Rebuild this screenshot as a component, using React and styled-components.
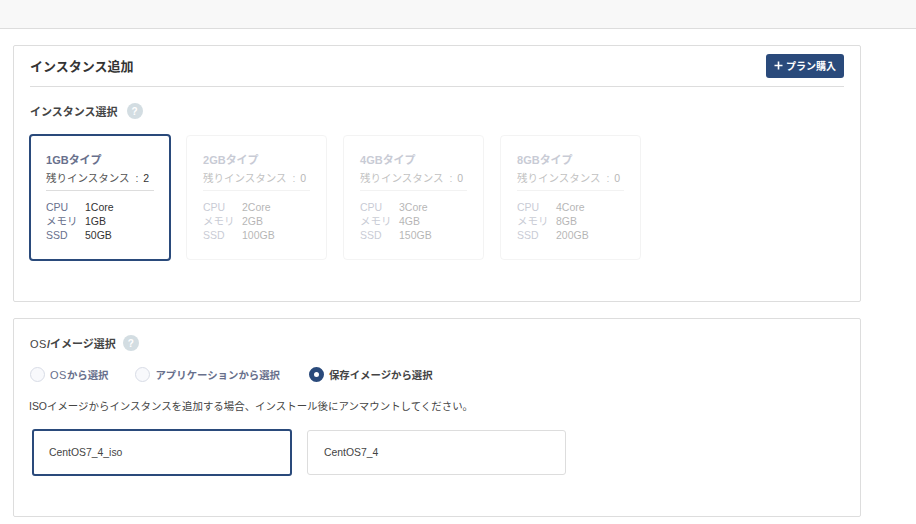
import React from 'react'
import styled, { createGlobalStyle } from 'styled-components'

const GlobalStyle = createGlobalStyle`
  html, body { margin: 0; padding: 0; background: #fff; overflow: hidden; }
  body {
    font-family: "Liberation Sans", "Noto Sans CJK JP", sans-serif;
    font-size: 11px;
    color: #333;
  }
`

const TopBar = styled.div`
  height: 28px;
  background: #f8f8f8;
  border-bottom: 1px solid #dddddd;
`

const Main = styled.div`
  width: 848px;
  margin-left: 13px;
  padding-top: 16px;
  display: flex;
  flex-direction: column;
  gap: 16px;
`

const Panel = styled.section`
  box-sizing: border-box;
  height: ${p => p.$height}px;
  border: 1px solid #dddddd;
  border-radius: 2px;
  padding: 0 16px 0 15px;
  background: #fff;
`

const PanelHead = styled.div`
  display: flex;
  align-items: center;
  justify-content: space-between;
  height: 40px;
  margin-left: 1px;
  border-bottom: 1px solid #dddddd;
`

const PanelTitle = styled.h2`
  margin: -1px 0 0;
  font-size: 13px;
  font-weight: 700;
  color: #333;
`

const BuyButton = styled.button`
  display: flex;
  align-items: center;
  gap: 2px;
  height: 24px;
  width: 78px;
  margin-top: -1px;
  padding: 0 0 0 7px;
  border: 0;
  border-radius: 3px;
  background: #2a4a7b;
  color: #fff;
  font-family: inherit;
  font-size: 10px;
  font-weight: 700;
  white-space: nowrap;
`

const SectionLabel = styled.div`
  display: flex;
  align-items: center;
  gap: ${p => p.$gap}px;
  height: 16px;
  margin: 16px 0 0 1px;
  font-size: 11px;
  font-weight: 700;
  color: #444;
`

const Spaced = styled.span`
  font-size: 11px;
  font-weight: 400;
  letter-spacing: 0.5px;
`

const Help = styled.span`
  display: inline-flex;
  align-items: center;
  justify-content: center;
  width: 16px;
  height: 16px;
  border-radius: 50%;
  background: #d3dde2;
  color: #fff;
  font-size: 10px;
  font-weight: 700;
`

const CardRow = styled.div`
  display: flex;
  align-items: center;
  gap: 16px;
  margin-top: 15px;
`

const Card = styled.div`
  box-sizing: border-box;
  width: ${p => (p.$selected ? '142px' : '141px')};
  height: ${p => (p.$selected ? '127px' : '125px')};
  margin-right: ${p => (p.$selected ? '-1px' : '0')};
  padding: 16px ${p => (p.$selected ? '15px' : '16px')};
  border: ${p => (p.$selected ? '2px solid #2a4a7b' : '1px solid #e0e0e0')};
  border-radius: 4px;
  opacity: ${p => (p.$disabled ? 0.36 : 1)};
`

const CardTitle = styled.div`
  font-size: 11px;
  font-weight: 700;
  line-height: 16px;
  color: #68708c;
`

const Remaining = styled.div`
  margin-top: 4px;
  padding-bottom: 5px;
  line-height: 13px;
  font-size: 10.5px;
  color: #555;
  border-bottom: 1px solid #dddddd;
  white-space: nowrap;
`

const RemainCount = styled.span`
  margin-left: 5px;
  color: #333;
`

const SpecList = styled.dl`
  display: grid;
  grid-template-columns: 39px 1fr;
  grid-auto-rows: 14px;
  margin: 9px 0 0;
  font-size: 10.5px;
  line-height: 14px;
`

const SpecName = styled.dt`
  color: #68708c;
  white-space: nowrap;
`

const SpecValue = styled.dd`
  margin: 0;
  color: #333;
`

const RadioRow = styled.div`
  display: flex;
  align-items: center;
  margin: 15px 0 0 1px;
  height: 16px;
`

const RadioItem = styled.label`
  display: flex;
  align-items: center;
  gap: 5px;
  margin-right: ${p => p.$gap}px;
  font-size: 10.4px;
  font-weight: 700;
  color: ${p => (p.$on ? '#444' : '#68708c')};
  white-space: nowrap;
`

const RadioDot = styled.span`
  box-sizing: border-box;
  width: 15px;
  height: 15px;
  border-radius: 50%;
  border: ${p => (p.$on ? '5px solid #2a4a7b' : '1px solid #d8dce6')};
  background: ${p => (p.$on ? '#fff' : '#f8f9fc')};
`

const Note = styled.p`
  margin: 18px 0 0;
  font-size: 10.45px;
  line-height: 14px;
  color: #444;
`

const ImageRow = styled.div`
  display: flex;
  align-items: center;
  gap: 15px;
  margin: 15px 0 0 3px;
`

const ImageCard = styled.div`
  box-sizing: border-box;
  display: flex;
  align-items: center;
  width: ${p => (p.$selected ? '260px' : '259px')};
  height: ${p => (p.$selected ? '47px' : '45px')};
  padding-left: ${p => (p.$selected ? '15px' : '16px')};
  border: ${p => (p.$selected ? '2px solid #2a4a7b' : '1px solid #dddddd')};
  border-radius: 3px;
  font-size: 10.4px;
  color: #444;
`

const plans = [
  { gb: 1, left: 2, core: 1, ssd: 50 },
  { gb: 2, left: 0, core: 2, ssd: 100 },
  { gb: 4, left: 0, core: 3, ssd: 150 },
  { gb: 8, left: 0, core: 4, ssd: 200 },
]

const sources = [
  { label: <><Spaced>OS</Spaced>から選択</>, key: 'os', gap: 27 },
  { label: 'アプリケーションから選択', key: 'app', gap: 29 },
  { label: '保存イメージから選択', key: 'saved', gap: 0, on: true },
]

export default function App() {
  return (
    <>
      <GlobalStyle />
      <TopBar />
      <Main>
        <Panel $height={257}>
          <PanelHead>
            <PanelTitle>インスタンス追加</PanelTitle>
            <BuyButton>
              <svg width="11" height="11" viewBox="0 0 11 11">
                <path d="M5.5 1.5v8M1.5 5.5h8" stroke="#fff" strokeWidth="1.6" />
              </svg>
              プラン購入
            </BuyButton>
          </PanelHead>
          <SectionLabel $gap={9}>
            インスタンス選択 <Help>?</Help>
          </SectionLabel>
          <CardRow>
            {plans.map((p, i) => (
              <Card key={p.gb} $selected={i === 0} $disabled={i !== 0}>
                <CardTitle>{p.gb}GBタイプ</CardTitle>
                <Remaining>残りインスタンス &nbsp;:<RemainCount>{p.left}</RemainCount></Remaining>
                <SpecList>
                  <SpecName>CPU</SpecName>
                  <SpecValue>{p.core}Core</SpecValue>
                  <SpecName>メモリ</SpecName>
                  <SpecValue>{p.gb}GB</SpecValue>
                  <SpecName>SSD</SpecName>
                  <SpecValue>{p.ssd}GB</SpecValue>
                </SpecList>
              </Card>
            ))}
          </CardRow>
        </Panel>
        <Panel $height={199}>
          <SectionLabel $gap={7}>
            <span><Spaced>OS</Spaced>/イメージ選択</span> <Help>?</Help>
          </SectionLabel>
          <RadioRow>
            {sources.map(s => (
              <RadioItem key={s.key} $gap={s.gap} $on={s.on}>
                <RadioDot $on={s.on} />
                <span>{s.label}</span>
              </RadioItem>
            ))}
          </RadioRow>
          <Note>ISOイメージからインスタンスを追加する場合、インストール後にアンマウントしてください。</Note>
          <ImageRow>
            <ImageCard $selected>CentOS7_4_iso</ImageCard>
            <ImageCard>CentOS7_4</ImageCard>
          </ImageRow>
        </Panel>
      </Main>
    </>
  )
}
